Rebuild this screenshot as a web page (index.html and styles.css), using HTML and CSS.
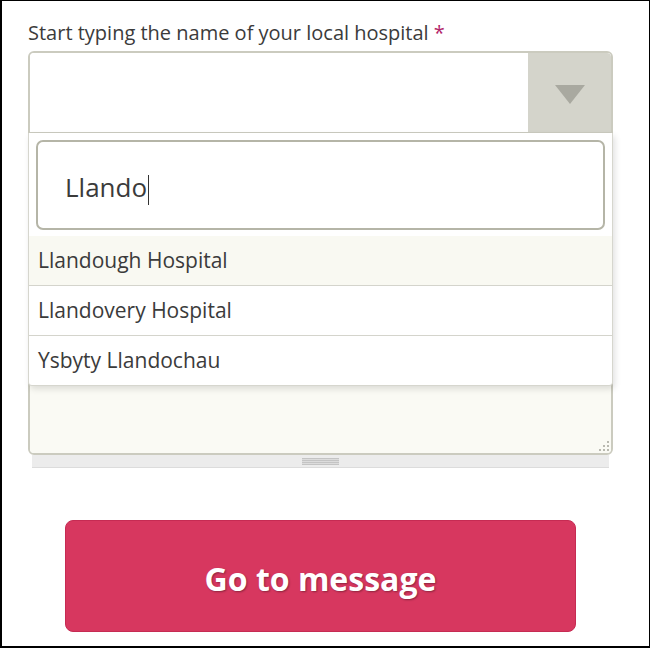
FILE: index.html
```html
<!DOCTYPE html>
<html lang="en">
<head>
    <meta charset="UTF-8">
    <meta name="viewport" content="width=device-width, initial-scale=1.0">
    <title>Find your hospital</title>
    <link rel="stylesheet" href="styles.css">
</head>
<body>
    <div class="page">
        <label class="field-label" for="hospital">Start typing the name of your local hospital <span class="req">*</span></label>

        <div class="combo">
            <div class="select-box">
                <span class="select-value"></span>
                <span class="select-arrow"><span class="triangle"></span></span>
            </div>
            <div class="textarea-area">
                <span class="grip"></span>
            </div>

            <!-- open dropdown sits over the textarea -->
            <div class="dropdown">
                <div class="search-wrap">
                    <div class="search" id="hospital">Llando<span class="caret"></span></div>
                </div>
                <ul class="results">
                    <li class="result active">Llandough Hospital</li>
                    <li class="result">Llandovery Hospital</li>
                    <li class="result">Ysbyty Llandochau</li>
                </ul>
            </div>
        </div>
        <div class="resize-bar"><span class="handle"></span></div>

        <button class="btn">Go to message</button>
    </div>
</body>
</html>
```

FILE: styles.css
```css
* {
    box-sizing: border-box;
}
body {
    margin: 0;
    font-family: "Open Sans", "Noto Sans", sans-serif;
    color: #3b3b3b;
    background: #fff;
}
.page {
    width: 650px;
    height: 648px;
    border-style: solid;
    border-color: #000;
    border-width: 1px 1px 2px 2px;
    padding: 18px 36px 0 26px;
}
.field-label {
    display: block;
    font-size: 20px;
    line-height: 27px;
    height: 32px;
}
.req {
    color: #b3256a;
}
.combo {
    position: relative;
    border: 2px solid #cbcbbf;
    border-radius: 6px;
    height: 404px;
    display: flex;
    flex-direction: column;
}
.select-box {
    display: flex;
    height: 81px;
    background: #fff;
    border-bottom: 2px solid #cbcbbf;
    border-radius: 4px 4px 0 0;
}
.select-value {
    flex: 1;
}
.select-arrow {
    width: 83px;
    background: #d4d4cb;
    border-top-right-radius: 4px;
    display: flex;
    align-items: center;
    justify-content: center;
}
.triangle {
    width: 0;
    height: 0;
    margin-top: 4px;
    border-left: 15px solid transparent;
    border-right: 15px solid transparent;
    border-top: 19px solid #a9a9a0;
}
.textarea-area {
    flex: 1;
    position: relative;
    background: #fafaf4;
    border-radius: 0 0 4px 4px;
}
.grip {
    position: absolute;
    right: 2px;
    bottom: 2px;
    width: 10px;
    height: 10px;
    background:
        linear-gradient(#b9b9b0, #b9b9b0) 8px 0 / 2px 2px no-repeat,
        linear-gradient(#b9b9b0, #b9b9b0) 4px 4px / 2px 2px no-repeat,
        linear-gradient(#b9b9b0, #b9b9b0) 8px 4px / 2px 2px no-repeat,
        linear-gradient(#b9b9b0, #b9b9b0) 0 8px / 2px 2px no-repeat,
        linear-gradient(#b9b9b0, #b9b9b0) 4px 8px / 2px 2px no-repeat,
        linear-gradient(#b9b9b0, #b9b9b0) 8px 8px / 2px 2px no-repeat;
}
.dropdown {
    position: absolute;
    top: 80px;
    left: -2px;
    right: -2px;
    background: #fff;
    border: 1px solid #d6d6ce;
    border-top: none;
    border-radius: 0 0 4px 4px;
    box-shadow: 2px 3px 6px rgba(0, 0, 0, 0.12);
}
.search-wrap {
    padding: 7px 7px 6px 7px;
}
.search {
    height: 90px;
    border: 2px solid #b5b5a7;
    border-radius: 7px;
    padding: 0 0 0 27px;
    font-size: 26px;
    line-height: 90px;
    color: #3b3b3b;
}
.caret {
    display: inline-block;
    width: 1px;
    height: 30px;
    background: #333;
    vertical-align: middle;
    margin-left: 1px;
}
.results {
    list-style: none;
    margin: 0;
    padding: 0;
}
.result {
    height: 50px;
    line-height: 49px;
    padding-left: 9px;
    font-size: 21px;
    border-bottom: 1px solid #d4d4cc;
}
.result:last-child {
    border-bottom: none;
    height: 49px;
}
.result.active {
    background: #f9f9f2;
}
.resize-bar {
    margin: 0 4px;
    height: 13px;
    background: #ececec;
    border-bottom: 1px solid #dcdcdc;
    display: flex;
    justify-content: center;
    align-items: center;
}
.handle {
    width: 37px;
    height: 7px;
    background: repeating-linear-gradient(#c4c4c4 0 1px, #dcdcdc 1px 2px);
}
.btn {
    display: block;
    width: 511px;
    height: 112px;
    margin: 52px auto 0;
    padding-top: 5px;
    background-color: #d7375f;
    border: 1px solid #c62b53;
    border-radius: 8px;
    color: #fff;
    font-family: "Open Sans", "Noto Sans", sans-serif;
    font-weight: bold;
    font-size: 32px;
    text-shadow: 1px 1px 2px rgba(0, 0, 0, 0.35);
    cursor: pointer;
}
.btn:hover {
    background-color: #c92d55;
}
```
